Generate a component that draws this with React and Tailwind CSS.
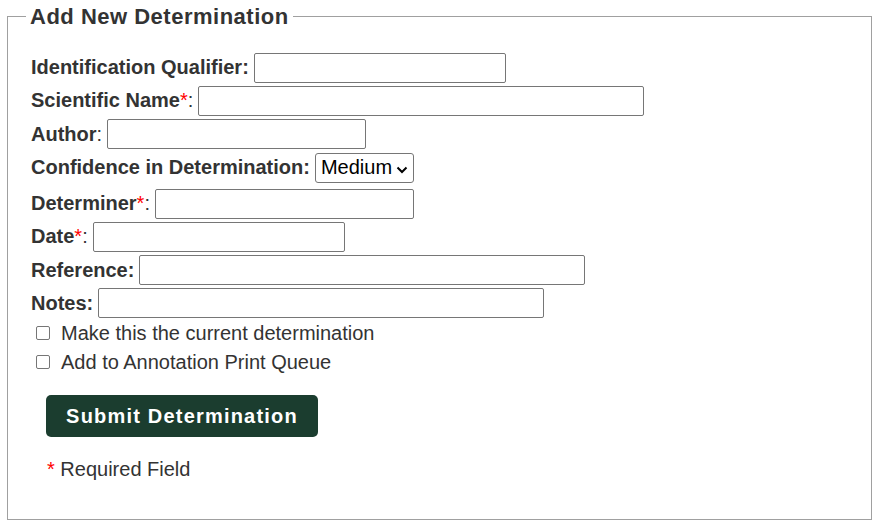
import React from "react";

const Req = () => <span className="text-[#ff0000] font-normal">*</span>;

function Row({ children, mt, w, select }) {
  return (
    <div className={`flex items-center h-[30px] ${mt}`}>
      {children}
      {select ? (
        <div className="ml-[5px] relative h-[30px] w-[99px] border border-[#767676] rounded-[3px] flex items-center pl-[5px] text-black">
          <span>Medium</span>
          <svg className="absolute right-[5px] top-[12px]" width="12" height="8" viewBox="0 0 12 8">
            <path d="M1.5 1.5 L6 6 L10.5 1.5" fill="none" stroke="#000" strokeWidth="2" />
          </svg>
        </div>
      ) : (
        <input type="text" className={`ml-[5px] h-[30px] ${w} border border-[#767676] rounded-[2px] bg-white`} />
      )}
    </div>
  );
}

function Check({ children, mt }) {
  return (
    <div className={`flex items-center h-[29px] ${mt}`}>
      <span className="ml-[5px] w-[14px] h-[14px] border border-[#767676] rounded-[2px] bg-white"></span>
      <span className="ml-[11px] pt-[1px]">{children}</span>
    </div>
  );
}

export default function App() {
  return (
    <div className="bg-white w-[875px] h-[526px] pt-[5px] pl-[7px] font-['Liberation_Sans',Arial,sans-serif] text-[20px] text-[#333] leading-[23px]">
      <fieldset className="w-[865px] h-[515px] border border-[#a0a0a0] p-0 m-0">
        <legend className="ml-[18px] px-[4px] text-[22px] tracking-[0.5px] font-bold leading-[23px]">
          Add New Determination
        </legend>
        <div className="pl-[23px] pt-[24.5px]">
          <Row w="w-[252px]">
            <span className="font-bold">Identification Qualifier:</span>
          </Row>
          <Row mt="mt-[3px]" w="w-[446px]">
            <span><span className="font-bold">Scientific Name</span><Req />:</span>
          </Row>
          <Row mt="mt-[3.5px]" w="w-[259px]">
            <span><span className="font-bold">Author</span>:</span>
          </Row>
          <Row mt="mt-[3.5px]" select>
            <span className="font-bold">Confidence in Determination:</span>
          </Row>
          <Row mt="mt-[6px]" w="w-[259px]">
            <span><span className="font-bold">Determiner</span><Req />:</span>
          </Row>
          <Row mt="mt-[3px]" w="w-[252px]">
            <span><span className="font-bold">Date</span><Req />:</span>
          </Row>
          <Row mt="mt-[3.5px]" w="w-[446px]">
            <span className="font-bold">Reference:</span>
          </Row>
          <Row mt="mt-[3px]" w="w-[446px]">
            <span className="font-bold">Notes:</span>
          </Row>
          <Check mt="mt-[0.5px]">Make this the current determination</Check>
          <Check>Add to Annotation Print Queue</Check>
          <button className="mt-[18.5px] ml-[15px] w-[272px] h-[42px] rounded-[5px] bg-[#1b3d2f] text-white font-bold text-[20px] tracking-[1.2px] flex items-center justify-center">
            Submit Determination
          </button>
          <div className="mt-[20.5px] ml-[16px]">
            <span className="text-[#ff0000]">*</span> Required Field
          </div>
        </div>
      </fieldset>
    </div>
  );
}
